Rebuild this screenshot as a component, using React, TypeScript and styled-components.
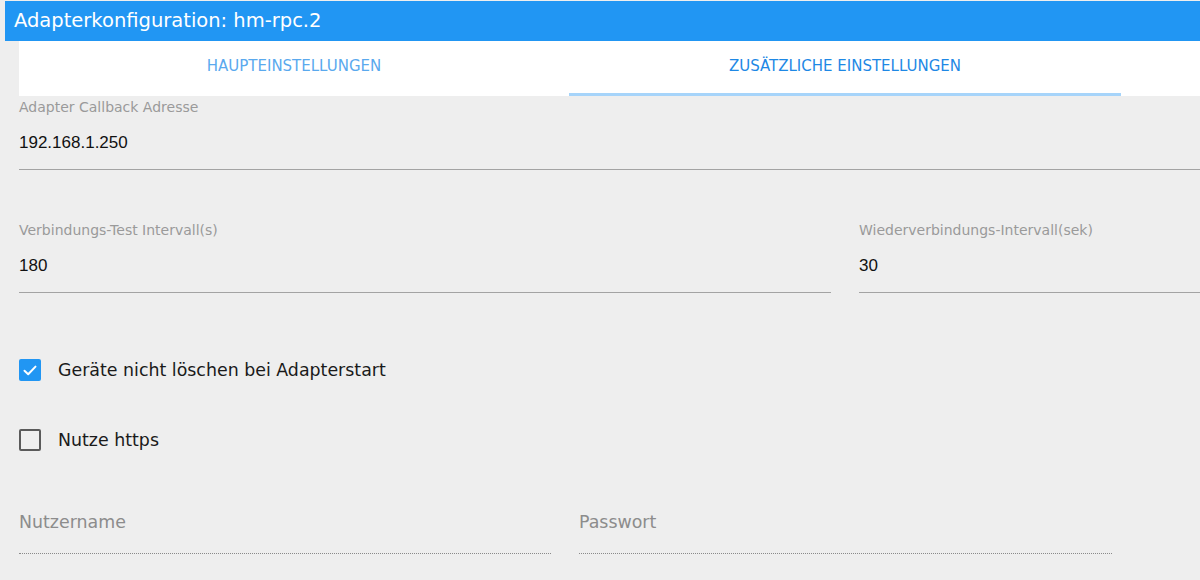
import React from 'react';
import styled, { createGlobalStyle } from 'styled-components';

const GlobalStyle = createGlobalStyle`
  html, body {
    margin: 0;
    padding: 0;
    background: #eeeeee;
    overflow: hidden;
  }

  body {
    font-family: "DejaVu Sans", "Noto Sans", sans-serif;
  }
`;

const Page = styled.div`
  width: 1200px;
  height: 580px;
  padding: 1px 0 0 5px;
  box-sizing: border-box;
  overflow: hidden;
  background: #eeeeee;
`;

const TitleBar = styled.div`
  height: 40px;
  width: 1240px;
  padding-left: 9px;
  background: #2196f3;
  color: #ffffff;
  font-size: 19.5px;
  line-height: 40px;
  white-space: nowrap;
`;

const Content = styled.div`
  padding-left: 14px;
  width: 1240px;
`;

const TabBar = styled.div`
  display: flex;
  height: 55px;
  background: #ffffff;
`;

const Tab = styled.div<{ $active?: boolean }>`
  flex: 0 0 ${({ $active }) => ($active ? '552px' : '550px')};
  display: flex;
  align-items: center;
  justify-content: center;
  padding-bottom: 2px;
  box-sizing: border-box;
  font-size: 15px;
  text-transform: uppercase;
  color: ${({ $active }) => ($active ? '#1e88e5' : '#5aa9ee')};
  border-bottom: 3px solid ${({ $active }) => ($active ? '#a6d4fa' : 'transparent')};
`;

const Row = styled.div<{ $cols: string; $top: number }>`
  display: grid;
  grid-template-columns: ${({ $cols }) => $cols};
  column-gap: 28px;
  margin-top: ${({ $top }) => $top}px;
`;

const Field = styled.div`
  display: flex;
  flex-direction: column;
`;

const Label = styled.div`
  height: 16px;
  font-size: 14px;
  line-height: 16px;
  color: #9a9a9a;
  white-space: nowrap;
`;

const Value = styled.div`
  margin-top: 18px;
  height: 20px;
  font-family: "Liberation Sans", Arial, sans-serif;
  font-size: 17px;
  line-height: 20px;
  color: #111111;
`;

const Underline = styled.div<{ $dotted?: boolean }>`
  margin-top: ${({ $dotted }) => ($dotted ? '21px' : '16px')};
  border-bottom: 1px ${({ $dotted }) => ($dotted ? 'dotted #8a8a8a' : 'solid #a3a3a3')};
`;

const Placeholder = styled.div`
  height: 20px;
  font-size: 17.4px;
  line-height: 20px;
  color: #8c8c8c;
`;

const CheckRow = styled.label<{ $top: number }>`
  display: flex;
  align-items: center;
  gap: 17px;
  margin-top: ${({ $top }) => $top}px;
  height: 22px;
  font-size: 17.4px;
  color: #1a1a1a;
`;

const Box = styled.span<{ $checked?: boolean }>`
  display: flex;
  align-items: center;
  justify-content: center;
  width: 22px;
  height: 22px;
  box-sizing: border-box;
  border-radius: 2px;
  background: ${({ $checked }) => ($checked ? '#2196f3' : 'transparent')};
  border: ${({ $checked }) => ($checked ? 'none' : '2.5px solid #5a5a5a')};
`;

const Check = () => (
  <svg width="14" height="11" viewBox="0 0 14 11">
    <path d="M1.5 5.8 L5.2 9.2 L12.5 1.6" fill="none" stroke="#ffffff" strokeWidth="2" strokeLinecap="round" strokeLinejoin="round" />
  </svg>
);

const App = () => (
  <>
    <GlobalStyle />
    <Page>
      <TitleBar>Adapterkonfiguration: hm-rpc.2</TitleBar>
      <Content>
        <TabBar>
          <Tab>Haupteinstellungen</Tab>
          <Tab $active>Zusätzliche Einstellungen</Tab>
        </TabBar>

        <Row $cols="1240px" $top={3}>
          <Field>
            <Label>Adapter Callback Adresse</Label>
            <Value>192.168.1.250</Value>
            <Underline />
          </Field>
        </Row>

        <Row $cols="812px 400px" $top={52}>
          <Field>
            <Label>Verbindungs-Test Intervall(s)</Label>
            <Value>180</Value>
            <Underline />
          </Field>
          <Field>
            <Label>Wiederverbindungs-Intervall(sek)</Label>
            <Value>30</Value>
            <Underline />
          </Field>
        </Row>

        <CheckRow $top={66}>
          <Box $checked>
            <Check />
          </Box>
          Geräte nicht löschen bei Adapterstart
        </CheckRow>

        <CheckRow $top={48}>
          <Box />
          Nutze https
        </CheckRow>

        <Row $cols="532px 533px" $top={61}>
          <Field>
            <Placeholder>Nutzername</Placeholder>
            <Underline $dotted />
          </Field>
          <Field>
            <Placeholder>Passwort</Placeholder>
            <Underline $dotted />
          </Field>
        </Row>
      </Content>
    </Page>
  </>
);

export default App;
